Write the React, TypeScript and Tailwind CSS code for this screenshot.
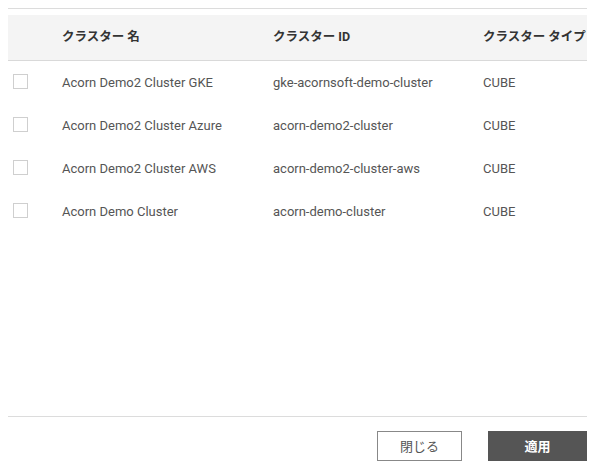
import React from "react";

const rows = [
  { name: "Acorn Demo2 Cluster GKE", id: "gke-acornsoft-demo-cluster", type: "CUBE" },
  { name: "Acorn Demo2 Cluster Azure", id: "acorn-demo2-cluster", type: "CUBE" },
  { name: "Acorn Demo2 Cluster AWS", id: "acorn-demo2-cluster-aws", type: "CUBE" },
  { name: "Acorn Demo Cluster", id: "acorn-demo-cluster", type: "CUBE" },
];

export default function App() {
  return (
    <div
      className="w-[595px] h-[472px] bg-white flex flex-col px-[8px] pt-[8px]"
      style={{ fontFamily: "Roboto, 'Noto Sans CJK JP', sans-serif" }}
    >
      <div className="border-t border-[#dcdcdc] pt-[6px] flex-1 flex flex-col">
        <div className="flex h-[46px] bg-[#f4f4f4] border-b border-[#d9d9d9] items-center text-[12.5px] font-bold text-[#333]">
          <div className="w-[46px]" />
          <div className="w-[211px] pl-[8px]">クラスター 名</div>
          <div className="w-[210px] pl-[8px]">クラスター ID</div>
          <div className="flex-1 pl-[8px] whitespace-nowrap">クラスター タイプ</div>
        </div>
        {rows.map((r) => (
          <div key={r.id} className="flex h-[43px] items-center text-[13px] text-[#555]">
            <div className="w-[46px] pl-[5px] flex items-center">
              <div className="w-[15px] h-[15px] mb-[3px] border border-[#cfcfcf] bg-white" />
            </div>
            <div className="w-[211px] pl-[8px]">{r.name}</div>
            <div className="w-[210px] pl-[8px]">{r.id}</div>
            <div className="flex-1 pl-[8px]">{r.type}</div>
          </div>
        ))}
      </div>
      <div className="border-t border-[#dcdcdc] pt-[14px] pb-[11px] flex justify-end gap-[26px]">
        <button
          className="w-[85px] h-[30px] border border-[#888] bg-white text-[13px] text-[#555]"
          style={{ fontFamily: "'Noto Sans CJK JP', sans-serif" }}
        >
          閉じる
        </button>
        <button
          className="w-[99px] h-[30px] bg-[#555555] text-[13px] text-white font-bold"
          style={{ fontFamily: "'Noto Sans CJK JP', sans-serif" }}
        >
          適用
        </button>
      </div>
    </div>
  );
}
